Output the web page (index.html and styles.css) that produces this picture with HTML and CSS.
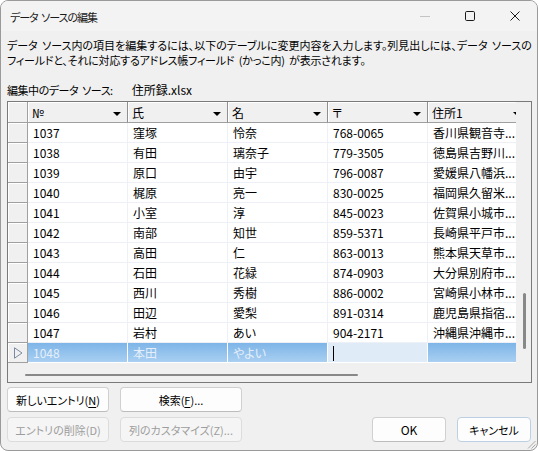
FILE: index.html
```html
<!DOCTYPE html>
<html lang="ja">
<head>
<meta charset="utf-8">
<title>データ ソースの編集</title>
<link rel="stylesheet" href="styles.css">
</head>
<body>
<div class="window">
  <div class="titlebar">
    <span class="title">データ ソースの編集</span>
    <div class="controls">
      <span class="ctl"><svg width="10" height="10" viewBox="0 0 10 10"><path d="M0 5.5h10" stroke="#c4c4c4" stroke-width="1"/></svg></span>
      <span class="ctl"><svg width="10" height="10" viewBox="0 0 10 10"><rect x="0.5" y="0.5" width="9" height="9" rx="1.2" fill="none" stroke="#1a1a1a" stroke-width="1"/></svg></span>
      <span class="ctl"><svg width="10" height="10" viewBox="0 0 10 10"><path d="M0.5 0.5L9.5 9.5M9.5 0.5L0.5 9.5" stroke="#1a1a1a" stroke-width="1"/></svg></span>
    </div>
  </div>
  <div class="content">
    <p class="desc"><span class="line1">データ ソース内の項目を編集するには、以下のテーブルに変更内容を入力します。列見出しには、データ ソースの</span><span class="line2">フィールドと、それに対応するアドレス帳フィールド (かっこ内) が表示されます。</span></p>
    <p class="source"><span class="source-label">編集中のデータ ソース:</span><span class="source-name">住所録.xlsx</span></p>
    <div class="grid">
      <div class="grid-main">
        <div class="rows">
          <div class="row head">
            <div class="rh"></div>
            <div class="hc"><span>№</span><i class="dd"></i></div>
            <div class="hc"><span>氏</span><i class="dd"></i></div>
            <div class="hc"><span>名</span><i class="dd"></i></div>
            <div class="hc"><span>〒</span><i class="dd"></i></div>
            <div class="hc"><span>住所1</span><i class="dd"></i></div>
          </div>
          <div class="row"><div class="rh"></div><div class="c">1037</div><div class="c">窪塚</div><div class="c">怜奈</div><div class="c">768-0065</div><div class="c">香川県観音寺...</div></div>
          <div class="row"><div class="rh"></div><div class="c">1038</div><div class="c">有田</div><div class="c">璃奈子</div><div class="c">779-3505</div><div class="c">徳島県吉野川...</div></div>
          <div class="row"><div class="rh"></div><div class="c">1039</div><div class="c">原口</div><div class="c">由宇</div><div class="c">796-0087</div><div class="c">愛媛県八幡浜...</div></div>
          <div class="row"><div class="rh"></div><div class="c">1040</div><div class="c">梶原</div><div class="c">亮一</div><div class="c">830-0025</div><div class="c">福岡県久留米...</div></div>
          <div class="row"><div class="rh"></div><div class="c">1041</div><div class="c">小室</div><div class="c">淳</div><div class="c">845-0023</div><div class="c">佐賀県小城市...</div></div>
          <div class="row"><div class="rh"></div><div class="c">1042</div><div class="c">南部</div><div class="c">知世</div><div class="c">859-5371</div><div class="c">長崎県平戸市...</div></div>
          <div class="row"><div class="rh"></div><div class="c">1043</div><div class="c">高田</div><div class="c">仁</div><div class="c">863-0013</div><div class="c">熊本県天草市...</div></div>
          <div class="row"><div class="rh"></div><div class="c">1044</div><div class="c">石田</div><div class="c">花緑</div><div class="c">874-0903</div><div class="c">大分県別府市...</div></div>
          <div class="row"><div class="rh"></div><div class="c">1045</div><div class="c">西川</div><div class="c">秀樹</div><div class="c">886-0002</div><div class="c">宮崎県小林市...</div></div>
          <div class="row"><div class="rh"></div><div class="c">1046</div><div class="c">田辺</div><div class="c">愛梨</div><div class="c">891-0314</div><div class="c">鹿児島県指宿...</div></div>
          <div class="row"><div class="rh"></div><div class="c">1047</div><div class="c">岩村</div><div class="c">あい</div><div class="c">904-2171</div><div class="c">沖縄県沖縄市...</div></div>
          <div class="row selected">
            <div class="rh"><svg width="10" height="12" viewBox="0 0 10 12"><path d="M1.5 0.8V11.2L9 6Z" fill="none" stroke="#7a8aa3" stroke-width="1"/></svg></div>
            <div class="c sel">1048</div><div class="c sel">本田</div><div class="c sel">やよい</div><div class="c edit"><i class="caret"></i></div><div class="c sel"></div>
          </div>
        </div>
        <div class="hscroll"><div class="hthumb"></div></div>
      </div>
      <div class="vscroll"><div class="vthumb"></div></div>
    </div>
    <div class="btn-row">
      <button class="btn w1">新しいエントリ(<u>N</u>)</button>
      <button class="btn w2">検索(<u>F</u>)...</button>
    </div>
    <div class="btn-row second">
      <button class="btn w1" disabled>エントリの削除(D)</button>
      <button class="btn w2" disabled>列のカスタマイズ(Z)...</button>
      <span class="spacer"></span>
      <button class="btn w3 ok">OK</button>
      <button class="btn w3 cancel">キャンセル</button>
    </div>
  </div>
  <svg class="grip" width="9" height="9" viewBox="0 0 9 9"><path d="M8.5 1L1 8.5M8.5 4.5L4.5 8.5M8.5 7.5L7.5 8.5" stroke="#a8a8a8" stroke-width="1"/></svg>
</div>
</body>
</html>
```
FILE: styles.css
```css
* { box-sizing: border-box; }
html, body { margin: 0; background: #ffffff; }
body {
  font-family: "Noto Sans CJK JP", "Noto Sans", sans-serif;
  font-size: 12px;
  color: #000;
  font-feature-settings: "palt";
}
.window {
  position: relative;
  width: 538px;
  height: 451px;
  border: 1px solid #9a9a9a;
  border-radius: 8px;
  background: #f0f0f0;
  overflow: hidden;
}
.titlebar {
  height: 30px;
  display: flex;
  align-items: center;
  padding-left: 9px;
  background: #f3f3f3;
}
.title {
  flex: 1;
  line-height: 30px;
  padding-top: 1px;
  color: #1a1a1a;
  font-size: 11px;
  letter-spacing: -1px;
  word-spacing: 2px;
}
.controls { display: flex; height: 30px; }
.ctl { width: 45px; display: flex; align-items: center; justify-content: center; }
.content { padding: 0 5px 0 6px; }
.desc { margin: 7px 0 0; line-height: 15px; white-space: nowrap; font-size: 11px; word-spacing: 2px; }
.line1 { display: block; letter-spacing: 0; }
.line2 { display: block; letter-spacing: -0.2px; }
.source { margin: 14px 0 0; line-height: 15px; }
.source-label { font-size: 11px; letter-spacing: -0.45px; word-spacing: 2px; }
.source-name { margin-left: 19px; }

.grid {
  margin-top: 3px;
  display: flex;
  height: 282px;
  border: 1px solid #7a7a7a;
  background: #f0f0f0;
}
.grid-main { width: 508px; display: flex; flex-direction: column; }
.rows { overflow: hidden; }
.row { display: flex; width: max-content; height: 20px; }
.row.head { height: 21px; }
.rh {
  width: 20px;
  flex: none;
  background: #f0f0f0;
  border-right: 1px solid #a0a0a0;
  border-bottom: 1px solid #a0a0a0;
  box-shadow: inset 1px 1px #ffffff;
  display: flex;
  align-items: center;
  justify-content: center;
}
.hc {
  width: 100px;
  flex: none;
  display: flex;
  align-items: center;
  justify-content: space-between;
  padding: 0 6px 0 4px;
  background: #f0f0f0;
  border-right: 1px solid #8f8f8f;
  border-bottom: 1px solid #a0a0a0;
  box-shadow: inset 1px 1px #ffffff;
}
.dd {
  width: 0;
  height: 0;
  margin-top: 3px;
  border-left: 4px solid transparent;
  border-right: 4px solid transparent;
  border-top: 4px solid #000;
}
.c {
  width: 100px;
  flex: none;
  padding-left: 5px;
  line-height: 20px;
  white-space: nowrap;
  overflow: hidden;
  background: #ffffff;
  border-right: 1px solid #edf1f7;
  border-bottom: 1px solid #edf1f7;
}
.c.sel {
  background: linear-gradient(#7db5e8, #a9cff1);
  color: #e6eff9;
  border-right-color: #ffffff;
  border-bottom-color: #ffffff;
}
.c.edit {
  background: #dfebf7;
  border-right-color: #ffffff;
  border-bottom-color: #ffffff;
  padding-top: 3px;
}
.caret { display: block; width: 1px; height: 15px; background: #000; }

.hscroll { height: 19px; padding-top: 11px; }
.hthumb { margin-left: 17px; width: 333px; height: 2px; background: #888888; border-radius: 1px; }
.vscroll { width: 15px; padding-top: 191px; }
.vthumb { margin-left: 7px; width: 3px; height: 56px; background: #888888; border-radius: 2px; }

.btn-row { display: flex; gap: 11px; margin-top: 4px; padding-right: 1px; }
.btn-row.second { margin-top: 5px; }
.spacer { flex: 1; }
.btn {
  height: 25px;
  padding: 0;
  font-family: inherit;
  font-size: 11px;
  font-feature-settings: "palt";
  color: #000;
  background: #fdfdfd;
  border: 1px solid #d0d0d0;
  border-bottom-color: #bcbcbc;
  border-radius: 4px;
}
.btn u { text-decoration-thickness: 1px; text-underline-offset: 2px; }
.btn:disabled { background: #f5f5f5; border-color: #dcdcdc; color: #9d9d9d; }
.ok { font-size: 12px; }
.w1 { width: 102px; }
.w2 { width: 122px; }
.w3 { width: 74px; }
.cancel { border-color: #bcd0e4; }
.grip { position: absolute; right: 1px; bottom: 1px; }
```
